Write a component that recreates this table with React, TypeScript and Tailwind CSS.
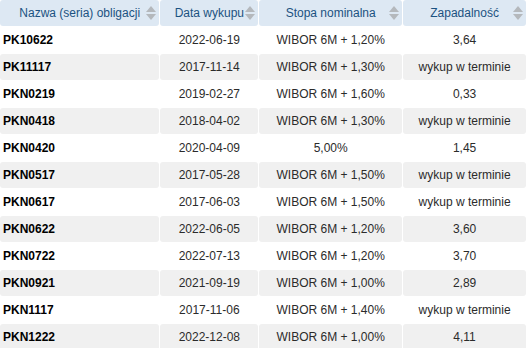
import React from "react";

type Row = {
  name: string;
  date: string;
  rate: string;
  due: string;
};

const rows: Row[] = [
  { name: "PK10622", date: "2022-06-19", rate: "WIBOR 6M + 1,20%", due: "3,64" },
  { name: "PK11117", date: "2017-11-14", rate: "WIBOR 6M + 1,30%", due: "wykup w terminie" },
  { name: "PKN0219", date: "2019-02-27", rate: "WIBOR 6M + 1,60%", due: "0,33" },
  { name: "PKN0418", date: "2018-04-02", rate: "WIBOR 6M + 1,30%", due: "wykup w terminie" },
  { name: "PKN0420", date: "2020-04-09", rate: "5,00%", due: "1,45" },
  { name: "PKN0517", date: "2017-05-28", rate: "WIBOR 6M + 1,50%", due: "wykup w terminie" },
  { name: "PKN0617", date: "2017-06-03", rate: "WIBOR 6M + 1,50%", due: "wykup w terminie" },
  { name: "PKN0622", date: "2022-06-05", rate: "WIBOR 6M + 1,20%", due: "3,60" },
  { name: "PKN0722", date: "2022-07-13", rate: "WIBOR 6M + 1,20%", due: "3,70" },
  { name: "PKN0921", date: "2021-09-19", rate: "WIBOR 6M + 1,00%", due: "2,89" },
  { name: "PKN1117", date: "2017-11-06", rate: "WIBOR 6M + 1,40%", due: "wykup w terminie" },
  { name: "PKN1222", date: "2022-12-08", rate: "WIBOR 6M + 1,00%", due: "4,11" },
];

// strzałki sortowania w nagłówku
const SortIcon = () => (
  <svg width="10" height="14" viewBox="0 0 10 14" className="absolute right-[3px] top-[6px]">
    <path d="M5 0 L10 6 L0 6 Z" fill="#b4b8bc" />
    <path d="M0 8 L10 8 L5 14 Z" fill="#b4b8bc" />
  </svg>
);

const headers = ["Nazwa (seria) obligacji", "Data wykupu", "Stopa nominalna", "Zapadalność"];

export default function App() {
  return (
    <div className="w-[527px] h-[348px] overflow-hidden bg-white">
      <table
        className="-mt-px -ml-px table-fixed border-separate border-spacing-[1px] text-[12px] text-[#2b2b2b]"
        style={{ fontFamily: '"Liberation Sans", Arial, sans-serif' }}
      >
        <colgroup>
          <col className="w-[160px]" />
          <col className="w-[98px]" />
          <col className="w-[144px]" />
          <col className="w-[124px]" />
        </colgroup>
        <thead>
          <tr>
            {headers.map((h) => (
              <th
                key={h}
                className="relative h-[26px] p-0 px-[12px] rounded-[3px] bg-[#dde8f3] font-normal text-[#1b5281] text-center whitespace-nowrap"
              >
                {h}
                <SortIcon />
              </th>
            ))}
          </tr>
        </thead>
        <tbody>
          {rows.map((r, i) => {
            const bg = i % 2 === 1 ? "bg-[#f0f0f0]" : "bg-white";
            return (
              <tr key={r.name}>
                <td className={`h-[26px] p-0 pl-[3px] rounded-[3px] font-bold text-black ${bg}`}>{r.name}</td>
                <td className={`h-[26px] p-0 rounded-[3px] text-center ${bg}`}>{r.date}</td>
                <td className={`h-[26px] p-0 rounded-[3px] text-center ${bg}`}>{r.rate}</td>
                <td className={`h-[26px] p-0 rounded-[3px] text-center whitespace-nowrap ${bg}`}>{r.due}</td>
              </tr>
            );
          })}
        </tbody>
      </table>
    </div>
  );
}
